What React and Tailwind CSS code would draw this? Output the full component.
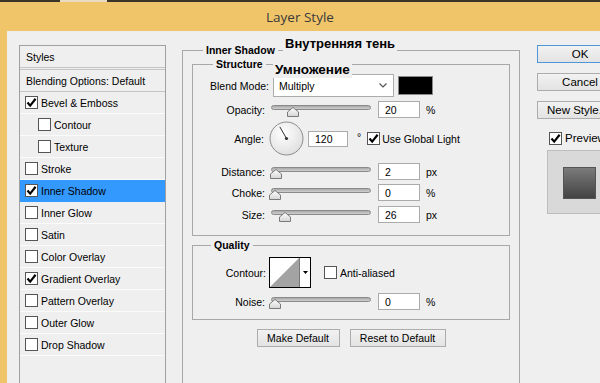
import { useState } from 'react';

const styleItems = [
  { label: 'Bevel & Emboss', checked: true },
  { label: 'Contour', indent: true },
  { label: 'Texture', indent: true },
  { label: 'Stroke' },
  { label: 'Inner Shadow', checked: true, active: true },
  { label: 'Inner Glow' },
  { label: 'Satin' },
  { label: 'Color Overlay' },
  { label: 'Gradient Overlay', checked: true },
  { label: 'Pattern Overlay' },
  { label: 'Outer Glow' },
  { label: 'Drop Shadow' },
];

const Checkbox = ({ checked }) => (
  <span className="w-[13px] h-[13px] shrink-0 bg-white border border-[#555] flex items-center justify-center">
    {checked && (
      <svg width="11" height="11" viewBox="0 0 11 11">
        <path d="M1.5 5.5 L4.2 8.6 L9.6 1.8" fill="none" stroke="#000" strokeWidth="2.2" />
      </svg>
    )}
  </span>
);

const Slider = ({ value, max }) => {
  const left = 6 + (value / max) * 92;
  return (
    <div className="relative w-[104px] h-[16px] shrink-0">
      <div className="absolute left-[2px] right-[2px] top-[3px] h-[5px] rounded-full border border-[#8a8a8a] bg-gradient-to-b from-[#a9a9a9] to-[#cfcfcf]" />
      <svg
        className="absolute top-[5px]"
        style={{ left: left - 6 }}
        width="12"
        height="10"
        viewBox="0 0 12 10"
      >
        <defs>
          <linearGradient id="thumb" x1="0" y1="0" x2="0" y2="1">
            <stop offset="0" stopColor="#ffffff" />
            <stop offset="1" stopColor="#d4d4d4" />
          </linearGradient>
        </defs>
        <path d="M0.5 9.5 V5 L6 0.5 L11.5 5 V9.5 Z" fill="url(#thumb)" stroke="#7a7a7a" />
      </svg>
    </div>
  );
};

const NumberBox = ({ value, unit, className = 'w-[42px]' }) => (
  <div className="flex items-center">
    <div className={`h-[17px] ${className} bg-white border border-[#ababab] flex items-center pl-[6px]`}>{value}</div>
    {unit && <span className="ml-[6px]">{unit}</span>}
  </div>
);

const SliderRow = ({ label, value, max, unit, className }) => (
  <div className={`flex items-center ${className}`}>
    <span className="w-[76px] text-right pr-[4px]">{label}</span>
    <Slider value={value} max={max} />
    <div className="ml-[5px]">
      <NumberBox value={value} unit={unit} />
    </div>
  </div>
);

const StylesList = () => (
  <div className="w-[147px] h-[360px] shrink-0 border border-[#a0a0a0] bg-[#efefef]">
    <div className="h-[22px] flex items-center pl-[6px] border-b border-[#c4c4c4]">Styles</div>
    <div className="h-[23px] mt-[1px] flex items-center pl-[6px] border-t border-b border-[#c4c4c4]">
      Blending Options: Default
    </div>
    {styleItems.map((item) => (
      <div
        key={item.label}
        className={`h-[22px] flex items-center gap-[3px] border-b ${
          item.active ? 'bg-[#3399ff] border-[#3399ff]' : 'border-[#fbfbfb]'
        } ${item.indent ? 'pl-[18px]' : 'pl-[5px]'}`}
      >
        <Checkbox checked={item.checked} />
        <span>{item.label}</span>
      </div>
    ))}
  </div>
);

const AngleDial = () => (
  <svg width="35" height="35" viewBox="0 0 35 35" className="shrink-0">
    <defs>
      <radialGradient id="dial" cx="0.4" cy="0.35" r="0.7">
        <stop offset="0" stopColor="#ffffff" />
        <stop offset="1" stopColor="#dedede" />
      </radialGradient>
    </defs>
    <circle cx="17.5" cy="17.5" r="16.5" fill="url(#dial)" stroke="#8c8c8c" />
    <line x1="17.5" y1="17.5" x2="10.8" y2="5.8" stroke="#333" strokeWidth="1" />
    <circle cx="17.5" cy="17.5" r="1.6" fill="#333" />
  </svg>
);

const ContourPicker = () => (
  <div className="w-[42px] h-[31px] border border-black bg-white flex">
    <svg width="29" height="29" viewBox="0 0 29 29">
      <path d="M0 29 L29 0 L29 29 Z" fill="#a3a3a3" />
    </svg>
    <div className="flex-1 border-l border-[#777] flex items-center justify-center">
      <svg width="5" height="3" viewBox="0 0 5 3">
        <path d="M0 0 H5 L2.5 3 Z" fill="#000" />
      </svg>
    </div>
  </div>
);

const WinButton = ({ children, primary, className = '' }) => (
  <button
    className={`h-[18px] flex items-center justify-center bg-gradient-to-b from-[#f2f2f2] to-[#e3e3e3] border ${
      primary ? 'border-[#4d97d9]' : 'border-[#acacac]'
    } ${className}`}
  >
    {children}
  </button>
);

export default function App() {
  const [preview] = useState(true);

  return (
    <div className="w-[600px] h-[383px] overflow-hidden bg-[#f0c56a] flex flex-col font-['Liberation_Sans',Arial,sans-serif] text-[10.5px] leading-[12px] text-black">
      {/* Taskbar strip */}
      <div className="h-[2px] bg-[#3b3529] flex shrink-0">
        <div className="ml-[60px] w-[47px] bg-[#e9dcc0]" />
      </div>

      {/* Title */}
      <div className="h-[29px] shrink-0 flex items-center justify-center font-['Open_Sans',sans-serif] text-[13.5px] text-[#3a3a3a]">
        Layer Style
      </div>

      {/* Body */}
      <div className="relative flex-1 min-h-0 ml-[7px] bg-[#efefef] flex items-start pl-[12px] pt-[14px]">
        <StylesList />

        {/* Inner Shadow */}
        <fieldset className="ml-[16px] -mt-[1px] w-[338px] h-[360px] shrink-0 border border-[#a8a8a8] px-[9px]">
          <legend className="ml-[11px] px-[3px] font-bold">Inner Shadow</legend>

          <fieldset className="mt-[2px] border border-[#a8a8a8] pb-[12px]">
            <legend className="ml-[20px] px-[3px] font-bold">Structure</legend>

            <div className="flex items-center mt-[4px]">
              <span className="w-[76px] text-right">Blend Mode:</span>
              <div className="ml-[4px] w-[121px] h-[23px] bg-white border border-[#acacac] flex items-center justify-between pl-[5px] pr-[6px]">
                <span>Multiply</span>
                <svg width="8" height="5" viewBox="0 0 8 5">
                  <path d="M0.5 0.5 L4 4 L7.5 0.5" fill="none" stroke="#555" strokeWidth="1.2" />
                </svg>
              </div>
              <div className="ml-[4px] w-[35px] h-[19px] border border-[#8a8a8a] bg-black" />
            </div>

            <SliderRow label="Opacity:" value={20} max={100} unit="%" className="mt-[4px]" />

            <div className="flex items-center mt-[3px]">
              <span className="w-[76px] text-right pr-[5px]">Angle:</span>
              <AngleDial />
              <div className="ml-[4px] h-[16px] w-[40px] bg-white border border-[#ababab] flex items-center pl-[6px]">
                120
              </div>
              <span className="ml-[9px] -mt-[4px]">°</span>
              <div className="ml-[6px] flex items-center gap-[2px]">
                <Checkbox checked />
                <span>Use Global Light</span>
              </div>
            </div>

            <SliderRow label="Distance:" value={2} max={250} unit="px" className="mt-[7px]" />
            <SliderRow label="Choke:" value={0} max={100} unit="%" className="mt-[4px]" />
            <SliderRow label="Size:" value={26} max={250} unit="px" className="mt-[5px]" />
          </fieldset>

          <fieldset className="mt-[3px] border border-[#a8a8a8] pb-[9px]">
            <legend className="ml-[18px] px-[3px] font-bold">Quality</legend>

            <div className="flex items-center mt-[6px]">
              <span className="w-[76px] text-right pr-[3px]">Contour:</span>
              <ContourPicker />
              <div className="ml-[13px] flex items-center gap-[3px]">
                <Checkbox />
                <span>Anti-aliased</span>
              </div>
            </div>

            <SliderRow label="Noise:" value={0} max={100} unit="%" className="mt-[5px]" />
          </fieldset>

          <div className="flex justify-center gap-[10px] mt-[9px]">
            <WinButton className="w-[83px] h-[17px]">Make Default</WinButton>
            <WinButton className="w-[96px] h-[17px]">Reset to Default</WinButton>
          </div>
        </fieldset>

        {/* Buttons */}
        <div className="ml-[17px] flex flex-col shrink-0 text-[11.5px] leading-[14px]">
          <WinButton primary className="w-[86px]">OK</WinButton>
          <WinButton className="w-[86px] mt-[10px]">Cancel</WinButton>
          <WinButton className="w-[86px] mt-[10px] justify-start pl-[9px] whitespace-nowrap">New Style...</WinButton>
          <div className="flex items-center gap-[3px] mt-[12px] ml-[12px]">
            <Checkbox checked={preview} />
            <span>Preview</span>
          </div>
          <div className="mt-[5px] ml-[10px] w-[70px] h-[64px] bg-[#d9d9d9] border border-[#bdbdbd] pl-[15px] pt-[16px]">
            <div className="w-[33px] h-[32px] bg-gradient-to-b from-[#7b7b7b] to-[#444] border border-[#555]" />
          </div>
        </div>

        {/* Annotations */}
        <span className="absolute left-[276px] top-[5px] px-[2px] bg-[#efefef] font-bold text-[13px] leading-[16px]">
          Внутренняя тень
        </span>
        <span className="absolute left-[266px] top-[31px] px-[2px] bg-[#efefef] font-bold text-[13.5px] leading-[16px]">
          Умножение
        </span>
      </div>
    </div>
  );
}
